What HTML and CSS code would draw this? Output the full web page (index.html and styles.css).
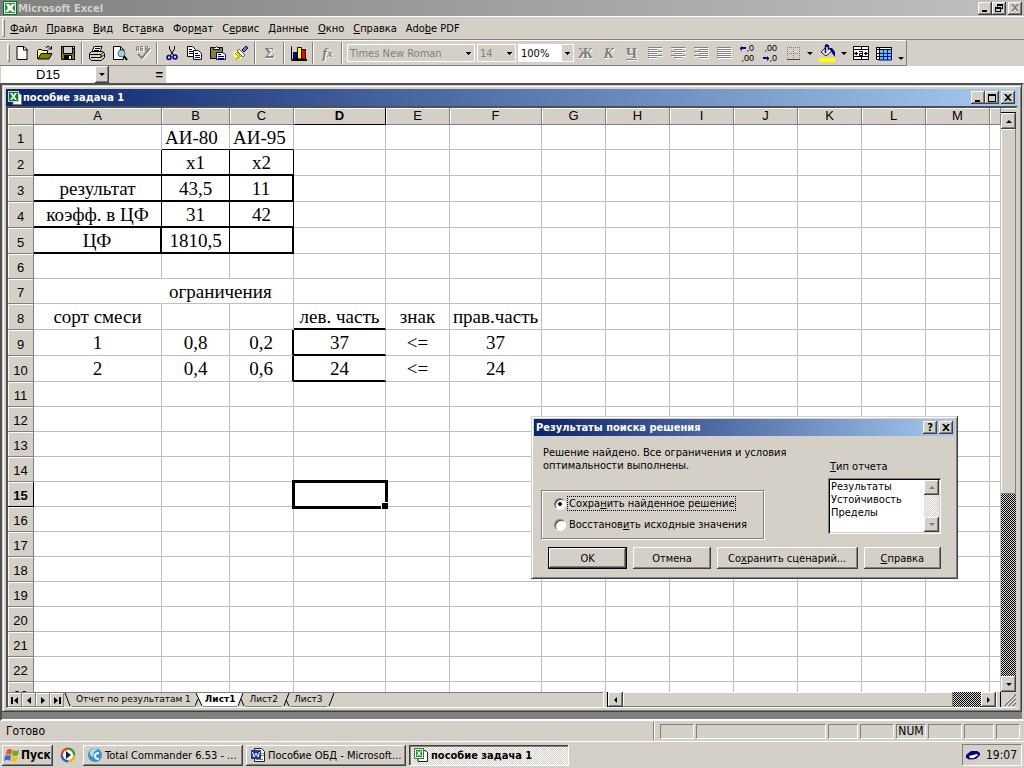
FILE: index.html
```html
<!DOCTYPE html>
<html lang="ru">
<head>
    <meta charset="UTF-8">
    <meta name="viewport" content="width=device-width, initial-scale=1.0">
    <title>Microsoft Excel</title>
    <link rel="stylesheet" href="styles.css">
</head>
<body>
    <header class="titlebar app-title">
        <svg class="icon" viewBox="0 0 16 16"><rect x="1" y="1" width="14" height="14" fill="#0c6b28"/><rect x="2" y="2" width="12" height="12" fill="#d8f0d8"/><rect x="3" y="3" width="10" height="10" fill="#2c9440"/><path d="M4 4h3l1 2 2-2h3l-3 4 3 4h-3l-2-2-2 2H3l3-4z" fill="#fff"/></svg>
        <h1>Microsoft Excel</h1>
        <div class="window-buttons">
            <button class="box-btn" aria-label="Свернуть"><svg viewBox="0 0 10 10"><path d="M2 7h5v2H2z"/></svg></button>
            <button class="box-btn" aria-label="Восстановить"><svg viewBox="0 0 10 10"><path d="M3 1h6v5H7V5h1V3H4v1H3zM1 4h6v5H1zm1 2v2h4V6z" fill-rule="evenodd"/></svg></button>
            <button class="box-btn gap disabled" aria-label="Закрыть" disabled><svg viewBox="0 0 10 10"><path d="M1 1h2l2 2 2-2h2L6 4.500l3 3.500H7L5 6 3 8H1l3-3.500z"/></svg></button>
        </div>
    </header>

    <nav class="menubar">
        <span class="grip"></span>
        <a href="#"><u>Ф</u>айл</a>
        <a href="#"><u>П</u>равка</a>
        <a href="#"><u>В</u>ид</a>
        <a href="#">Вст<u>а</u>вка</a>
        <a href="#">Фор<u>м</u>ат</a>
        <a href="#">С<u>е</u>рвис</a>
        <a href="#"><u>Д</u>анные</a>
        <a href="#"><u>О</u>кно</a>
        <a href="#"><u>С</u>правка</a>
        <a href="#">Ado<u>b</u>e PDF</a>
    </nav>

    <div class="toolbar-row">
        <div class="toolbar">
            <span class="grip"></span>
            <button class="tool" aria-label="Создать"><svg class="icon" viewBox="0 0 16 16"><path d="M3 1.500h7l3 3v10H3z" fill="#fff" stroke="#000"/><path d="M9.500 1v4h4" fill="none" stroke="#000"/></svg></button>
            <button class="tool" aria-label="Открыть"><svg class="icon" viewBox="0 0 16 16"><path d="M.5 14V5.500l1-1h3l1 1h5v3" fill="#ffff80" stroke="#000"/><path d="M1 14l3-5.500h11L12 14z" fill="#808000" stroke="#000"/><path d="M9 3l1-1.500h2l2 2M14.500 1v3h-3" fill="none" stroke="#000"/></svg></button>
            <button class="tool" aria-label="Сохранить"><svg class="icon" viewBox="0 0 16 16"><path d="M1 1h14v14H2l-1-1z" fill="#000"/><path d="M2 2h1v7h10V4h1v10h-2v-4H4v4H3l-1-1z" fill="#808000"/><path d="M4 2h8v6H4z" fill="#d4d0c8"/><path d="M9 11h2v3H9zM13 2h1v1h-1z" fill="#fff"/></svg></button>
            <span class="sep"></span>
            <button class="tool" aria-label="Печать"><svg class="icon" viewBox="0 0 16 16"><path d="M5 1.500h8L11 7H3z" fill="#fff" stroke="#000"/><path d="M6 3.500h5M5 5.500h5" stroke="#000"/><path d="M.5 8.500l2-2h11l2 2v4l-3 3h-10l-2-2z" fill="#d4d0c8" stroke="#000"/><path d="M1 9.500h11l3-3M2 12.500h10v-3M12 12.500l3-3" fill="none" stroke="#000"/><path d="M7 11h3v1H7z" fill="#ff0"/></svg></button>
            <button class="tool" aria-label="Предварительный просмотр"><svg class="icon" viewBox="0 0 16 16"><path d="M1.500 1.500h7l3 3v10h-10z" fill="#fff" stroke="#000"/><path d="M8.500 1v4h4" fill="none" stroke="#000"/><circle cx="9.500" cy="8.500" r="3.500" fill="#80e0e8" stroke="#606060"/><path d="M12 11l3 4" stroke="#000" stroke-width="2"/></svg></button>
            <button class="tool disabled" aria-label="Орфография" disabled><svg class="icon" viewBox="0 0 16 16"><path d="M1.500 6V2l1-1 1 1v4M1 4.500h3M8 1.500H5.500v4h2v-2h-2M10.500 6V1.500h2v4h-2M10.500 3.500h2" fill="none" stroke="#808080"/><path d="M3 9l4 4 8-10" fill="none" stroke="#808080" stroke-width="2"/></svg></button>
            <span class="sep"></span>
            <button class="tool" aria-label="Вырезать"><svg class="icon" viewBox="0 0 16 16"><path d="M5.500 1v3l4 6M10.500 1v3l-4 6" fill="none" stroke="#000"/><circle cx="5" cy="12.500" r="2" fill="none" stroke="#000080" stroke-width="1.500"/><circle cx="11" cy="12" r="2" fill="none" stroke="#000080" stroke-width="1.500"/></svg></button>
            <button class="tool" aria-label="Копировать"><svg class="icon" viewBox="0 0 16 16"><path d="M.5 1.500h5l3 3v7h-8z" fill="#fff" stroke="#000"/><path d="M2 4.500h3M2 6.500h5M2 8.500h5" stroke="#000"/><path d="M6.500 5.500h5l3 3v6h-8z" fill="#fff" stroke="#000080"/><path d="M8 8.500h3M8 10.500h5M8 12.500h5" stroke="#000080"/></svg></button>
            <button class="tool" aria-label="Вставить"><svg class="icon" viewBox="0 0 16 16"><path d="M.5 2.500h12v11H.5z" fill="#808040" stroke="#000"/><path d="M3.500 4.500v-2h2l1-1 1 1h2v2z" fill="#ffff80" stroke="#000"/><path d="M6.500 7.500h6l3 2v5h-9z" fill="#fff" stroke="#000080"/><path d="M8 9.500h3M8 11.500h6M8 13.500h6" stroke="#000080"/></svg></button>
            <button class="tool" aria-label="Формат по образцу"><svg class="icon" viewBox="0 0 16 16"><path d="M0 7l6-2 5 5-4 5-2-2-3 2 1-3-2 0z" fill="#ffff60"/><path d="M2 8l5 5M4 7l4 5M5 12l-2 3" stroke="#808000"/><path d="M6 4l6 6-2 2-6-6z" fill="#fff" stroke="#606060"/><path d="M9 5l4-4 2 2-4 4z" fill="#808080" stroke="#000080"/></svg></button>
            <span class="sep"></span>
            <button class="tool disabled sum" aria-label="Автосумма" disabled>Σ</button>
            <span class="sep"></span>
            <button class="tool" aria-label="Мастер диаграмм"><svg class="icon" viewBox="0 0 16 16"><path d="M0 2l1-1v13h15v2H1l-1-1z" fill="#000"/><path d="M2.500 7.500h4V14h-4z" fill="#0000c0" stroke="#000"/><path d="M6.500 2.500h4V14h-4z" fill="#ff0" stroke="#000"/><path d="M10.500 4.500h4V14h-4z" fill="#f00" stroke="#000"/></svg></button>
            <span class="sep"></span>
            <button class="tool disabled fx" aria-label="Вставка функции" disabled>f<sub>x</sub></button>
            <span class="sep"></span>
            <select class="combo font-name" aria-label="Шрифт" disabled><option>Times New Roman</option></select>
            <select class="combo font-size" aria-label="Размер" disabled><option>14</option></select>
            <select class="combo zoom" aria-label="Масштаб"><option>100%</option></select>
            <button class="tool disabled letter" disabled>Ж</button>
            <button class="tool disabled letter italic" disabled>К</button>
            <button class="tool disabled letter under" disabled>Ч</button>
            <button class="tool disabled" aria-label="По левому краю" disabled><svg class="icon" viewBox="0 0 16 16"><path d="M1 2.500h14M1 4.500h9M1 6.500h14M1 8.500h9M1 10.500h14M1 12.500h9" stroke="#808080"/></svg></button>
            <button class="tool disabled" aria-label="По центру" disabled><svg class="icon" viewBox="0 0 16 16"><path d="M1 2.500h14M4 4.500h8M1 6.500h14M4 8.500h8M1 10.500h14M4 12.500h8" stroke="#808080"/></svg></button>
            <button class="tool disabled" aria-label="По правому краю" disabled><svg class="icon" viewBox="0 0 16 16"><path d="M1 2.500h14M6 4.500h9M1 6.500h14M6 8.500h9M1 10.500h14M6 12.500h9" stroke="#808080"/></svg></button>
            <button class="tool disabled" aria-label="По ширине" disabled><svg class="icon" viewBox="0 0 16 16"><path d="M1 2.500h14M1 4.500h14M1 6.500h14M1 8.500h14M1 10.500h14M1 12.500h14" stroke="#808080"/></svg></button>
            <button class="tool digits" aria-label="Увеличить разрядность"><span><svg class="arrow" viewBox="0 0 6 5"><path d="M0 2l2-2v1h4v2H2v2L0 3z" fill="#000080"/></svg>,0</span><span>,00</span></button>
            <button class="tool digits" aria-label="Уменьшить разрядность"><span>,00</span><span><svg class="arrow" viewBox="0 0 6 5"><path d="M6 2L4 0v1H0v2h4v2l2-2z" fill="#000080"/></svg>,0</span></button>
            <button class="tool" aria-label="Границы"><svg class="icon" viewBox="0 0 16 16"><path d="M2.500 2v12M8.500 2v12M14.500 2v12M2 2.500h13M2 8.500h13" stroke="#808080" stroke-dasharray="1 1"/><path d="M2 14.500h13" stroke="#404040"/></svg></button>
            <button class="drop" aria-label="Виды границ"></button>
            <button class="tool" aria-label="Цвет заливки"><svg class="icon tall" viewBox="0 0 16 18"><path d="M2 8l6-6 5 5-6 5z" fill="#e8e8e8" stroke="#202020"/><path d="M6.500 9V2l1-1.500 2 1.500v4" fill="none" stroke="#000080" stroke-width="1.500"/><path d="M10 4h3l3 4v5l-3-4z" fill="#000080"/><path d="M0 14h16v4H0z" fill="#ff0"/></svg></button>
            <button class="drop" aria-label="Выбор цвета"></button>
            <button class="tool" aria-label="Объединить ячейки"><svg class="icon" viewBox="0 0 16 16"><path d="M.5 1.500h15v13H.5zM.5 4.500h15M.5 11.500h15M8.500 1v3M8.500 12v3" fill="#fff" stroke="#000"/><path d="M1 8.500h4M11 8.500h4M6 6.500h3.500v4h-3v-2h3" fill="none" stroke="#000"/><path d="M1 8.500l3-2v4zM15 8.500l-3-2v4z"/></svg></button>
            <button class="tool" aria-label="Таблица"><svg class="icon" viewBox="0 0 16 16"><path d="M.5 2.500h15v12H.5z" fill="#fff" stroke="#000"/><path d="M4 5h12v10H4z" fill="#40d0f0"/><path d="M.5 2.500h15v2H.5zM3.500 2v12M0 8.500h4M0 11.500h4" fill="none" stroke="#000"/><path d="M7.500 5v10M11.500 5v10M4 8.500h12M4 11.500h12" stroke="#000080"/><path d="M15.500 3v12H3" fill="none" stroke="#000080"/></svg></button>
            <button class="drop low" aria-label="Другие кнопки"></button>
        </div>
    </div>

    <div class="formula-bar">
        <input class="name-box" type="text" value="D15" aria-label="Имя ячейки">
        <button class="box-btn name-drop" aria-label="Список имён"><span class="tri down"></span></button>
        <button class="equals">=</button>
        <input class="formula" type="text" aria-label="Строка формул">
    </div>

    <main class="workspace">
        <section class="book">
            <div class="titlebar book-title">
                <svg class="icon" viewBox="0 0 16 16"><path d="M6 3.500h7l1.500 2v9H6z" fill="#fff" stroke="#808080"/><rect x="1" y="1" width="11" height="11" fill="#b8e0b8"/><rect x="2" y="2" width="9" height="9" fill="#107830"/><path d="M3 3h2l1.500 2L8 3h2L7.500 6.500 10 10H8L6.500 8 5 10H3l2.500-3.500z" fill="#fff"/></svg>
                <h2>пособие задача 1</h2>
                <div class="window-buttons">
                    <button class="box-btn" aria-label="Свернуть"><svg viewBox="0 0 10 10"><path d="M2 7h5v2H2z"/></svg></button>
                    <button class="box-btn" aria-label="Развернуть"><svg viewBox="0 0 10 10"><path d="M1 1h8v8H1zm1 2v5h6V3z" fill-rule="evenodd"/></svg></button>
                    <button class="box-btn gap" aria-label="Закрыть"><svg viewBox="0 0 10 10"><path d="M1 1h2l2 2 2-2h2L6 4.500l3 3.500H7L5 6 3 8H1l3-3.500z"/></svg></button>
                </div>
            </div>
            <div class="book-body">
                <div class="grid-row">
                    <div class="grid-view">
                        <table class="grid">
                            <colgroup>
                                <col class="c-head"><col class="c-a"><col class="c-b"><col class="c-std"><col class="c-wide"><col class="c-std"><col class="c-wide">
                                <col class="c-std"><col class="c-std"><col class="c-std"><col class="c-std"><col class="c-std"><col class="c-std"><col class="c-std"><col>
                            </colgroup>
                            <thead>
                                <tr>
                                    <th></th><th>A</th><th>B</th><th>C</th><th class="current">D</th><th>E</th><th>F</th><th>G</th>
                                    <th>H</th><th>I</th><th>J</th><th>K</th><th>L</th><th>M</th><th></th>
                                </tr>
                            </thead>
                            <tbody id="gridBody"></tbody>
                        </table>
                    </div>
                    <div class="vscroll">
                        <span class="split"></span>
                        <button class="box-btn" aria-label="Вверх"><span class="tri up"></span></button>
                        <span class="thumb"></span>
                        <span class="track dither"></span>
                        <button class="box-btn" aria-label="Вниз"><span class="tri down"></span></button>
                    </div>
                </div>
                <div class="tab-row">
                    <div class="sheet-tabs">
                        <button class="nav-btn" aria-label="Первый лист"><svg viewBox="0 0 10 9"><path d="M1 1h2v7H1zM8 1v7L4 4.500z"/></svg></button>
                        <button class="nav-btn" aria-label="Предыдущий лист"><svg viewBox="0 0 10 9"><path d="M7 1v7L3 4.500z"/></svg></button>
                        <button class="nav-btn" aria-label="Следующий лист"><svg viewBox="0 0 10 9"><path d="M3 1v7l4-3.500z"/></svg></button>
                        <button class="nav-btn" aria-label="Последний лист"><svg viewBox="0 0 10 9"><path d="M7 1h2v7H7zM2 1v7l4-3.500z"/></svg></button>
                        <svg class="edge" viewBox="0 0 8 14"><path d="M1 0l5 13" stroke="#000"/></svg>
                        <button class="tab">Отчет по результатам 1</button>
                        <svg class="edge" viewBox="0 0 8 14"><path d="M1 0h7v14H7z" fill="#fff"/><path d="M1 0l6 13M3 6L0 13" stroke="#000" fill="none"/></svg>
                        <button class="tab active">Лист1</button>
                        <svg class="edge" viewBox="0 0 8 14"><path d="M0 0h6L1 14H0z" fill="#fff"/><path d="M6 0L1 13M4 6l3 7" stroke="#000" fill="none"/></svg>
                        <button class="tab">Лист2</button>
                        <svg class="edge" viewBox="0 0 8 14"><path d="M7 0L2 13M4 7l3 6" stroke="#000" fill="none"/></svg>
                        <button class="tab">Лист3</button>
                        <svg class="edge" viewBox="0 0 8 14"><path d="M7 0L2 13" stroke="#000"/></svg>
                    </div>
                    <div class="hscroll">
                        <span class="vsplit"></span>
                        <button class="box-btn" aria-label="Влево"><span class="tri left"></span></button>
                        <span class="thumb"></span>
                        <span class="track dither"></span>
                        <button class="box-btn" aria-label="Вправо"><span class="tri right"></span></button>
                        <span class="vsplit"></span>
                        <svg class="resize" viewBox="0 0 15 14"><path d="M3 14L15 2M7 14l8-8M11 14l4-4" stroke="#808080" stroke-width="2"/><path d="M2 14L15 1M6 14l9-9M10 14l5-5" stroke="#fff"/></svg>
                    </div>
                </div>
            </div>
        </section>
    </main>

    <footer class="statusbar">
        <span class="status-text">Готово</span>
        <span class="status-sep"></span>
        <span class="pane mid"></span>
        <span class="pane wide"></span>
        <span class="pane"></span>
        <span class="pane mid"></span>
        <span class="pane">NUM</span>
        <span class="pane mid"></span>
        <span class="pane"></span>
        <span class="pane small"></span>
    </footer>

    <div class="taskbar">
        <button class="start"><svg class="icon" viewBox="0 0 16 16"><path d="M3 3q3-2 5 0L7 8Q4 6 1.500 8z" fill="#f05020"/><path d="M9 3q3 2 6 0l-1 5q-3 2-6 0z" fill="#60b020"/><path d="M1 9q3-2 6 0l-1 5q-3-2-6 0z" fill="#3070e0"/><path d="M8 9q3 2 6 0l-1 5q-3 2-6 0z" fill="#f8c010"/></svg>Пуск</button>
        <button class="quick" aria-label="Проигрыватель"><svg class="icon" viewBox="0 0 16 16"><path d="M8 2a6 6 0 0 1 6 6" fill="none" stroke="#30a030" stroke-width="3"/><path d="M14 8a6 6 0 0 1-6 6" fill="none" stroke="#f0b010" stroke-width="3"/><path d="M8 14a6 6 0 0 1-6-6" fill="none" stroke="#3060d0" stroke-width="3"/><path d="M2 8a6 6 0 0 1 6-6" fill="none" stroke="#e84820" stroke-width="3"/><circle cx="8" cy="8" r="5" fill="#fff"/><path d="M6 4l5 4-5 4z" fill="#102040"/></svg></button>
        <button class="task"><svg class="icon" viewBox="0 0 16 16"><circle cx="8" cy="8" r="7" fill="#3c90d0"/><path d="M3 4q3-4 8-2l-4 3-1 5q-4-1-3-6z" fill="#a8e0f0"/><path d="M12 6q-4 0-4 3t4 3" fill="none" stroke="#e8ffff" stroke-width="2"/><path d="M3 11l4 3-3-1z" fill="#40b040"/></svg><span>Total Commander 6.53 - ...</span></button>
        <button class="task"><svg class="icon" viewBox="0 0 16 16"><path d="M4.500 1.500h7l3 3v10h-10z" fill="#fff" stroke="#202020"/><path d="M11 6.500h3M11 8.500h3M6 12.500h7" stroke="#808080"/><rect x="1" y="3" width="10" height="9" fill="#203c98"/><path d="M2.500 5l1.500 5 2-4 2 4 1.500-5" fill="none" stroke="#fff"/></svg><span>Пособие ОБД - Microsoft...</span></button>
        <button class="task pressed"><svg class="icon" viewBox="0 0 16 16"><path d="M5 3.500h7l2.500 2v9H5z" fill="#fff" stroke="#202020"/><rect x="1" y="1" width="10" height="11" fill="#189030"/><rect x="2.500" y="2.500" width="7" height="8" fill="none" stroke="#fff"/><path d="M4 4h1l1 1.500L7 4h1.500L7 6.500 8.500 9H7L6 7.500 5 9H3.500L5 6.500z" fill="#fff"/></svg><span>пособие задача 1</span></button>
        <div class="tray">
            <svg class="icon" viewBox="0 0 16 16"><path d="M1 8l5-4h6l3 2v2l-4 4H4l-3-1z" fill="#000080"/><path d="M4 9l8-2 1 1-4 3H5z" fill="#fff"/><path d="M3 12h6" stroke="#801060"/></svg>
            <span>19:07</span>
        </div>
    </div>

    <form class="dialog">
        <div class="titlebar dialog-title">
            <h2>Результаты поиска решения</h2>
            <div class="window-buttons">
                <button type="button" class="box-btn" aria-label="Помощь">?</button>
                <button type="button" class="box-btn gap" aria-label="Закрыть"><svg viewBox="0 0 10 10"><path d="M1 1h2l2 2 2-2h2L6 4.500l3 3.500H7L5 6 3 8H1l3-3.500z"/></svg></button>
            </div>
        </div>
        <div class="dialog-main">
            <div class="dialog-left">
                <p>Решение найдено. Все ограничения и условия оптимальности выполнены.</p>
                <fieldset>
                    <label><input type="radio" name="keep" checked><span class="focus">Сохра<u>н</u>ить найденное решение</span></label>
                    <label><input type="radio" name="keep"><span>Восстанов<u>и</u>ть исходные значения</span></label>
                </fieldset>
            </div>
            <div class="dialog-right">
                <label for="reportType"><u>Т</u>ип отчета</label>
                <div class="listbox">
                    <select id="reportType" size="4">
                        <option>Результаты</option>
                        <option>Устойчивость</option>
                        <option>Пределы</option>
                    </select>
                    <div class="list-scroll">
                        <button type="button" class="box-btn disabled" aria-label="Вверх" disabled><span class="tri up"></span></button>
                        <span class="list-track"></span>
                        <button type="button" class="box-btn disabled" aria-label="Вниз" disabled><span class="tri down"></span></button>
                    </div>
                </div>
            </div>
        </div>
        <div class="dialog-buttons">
            <button type="button" class="push default">OK</button>
            <button type="button" class="push">Отмена</button>
            <button type="button" class="push long">Со<u>х</u>ранить сценарий...</button>
            <button type="button" class="push"><u>С</u>правка</button>
        </div>
    </form>

    <script>
        const columns = 'ABCDEFGHIJKLMN'.split('');
        const rowCount = 23;
        const tallRows = [2, 3, 4, 5, 8, 9, 10];

        const values = {
            B1: 'АИ-80', C1: 'АИ-95',
            B2: 'x1', C2: 'x2',
            A3: 'результат', B3: '43,5', C3: '11',
            A4: 'коэфф. в ЦФ', B4: '31', C4: '42',
            A5: 'ЦФ', B5: '1810,5',
            B7: 'ограничения',
            A8: 'сорт смеси', D8: 'лев. часть', E8: 'знак', F8: 'прав.часть',
            A9: '1', B9: '0,8', C9: '0,2', D9: '37', E9: '<=', F9: '37',
            A10: '2', B10: '0,4', C10: '0,6', D10: '24', E10: '<=', F10: '24'
        };

        // r/b = thin right/bottom line, R/B = thick one, n = no right line
        const borders = {
            B1: 'b', C1: 'b',
            A2: 'r B', B2: 'r B', C2: 'r B',
            A3: 'r B', B3: 'r B', C3: 'R B',
            A4: 'r B', B4: 'r B', C4: 'r B',
            A5: 'R B', B5: 'r B', C5: 'R B',
            A7: 'n', D8: 'B', C9: 'R', D9: 'B', C10: 'R', D10: 'B'
        };

        const names = { r: 'line-right', b: 'line-bottom', R: 'thick-right', B: 'thick-bottom', n: 'no-right' };
        const body = document.getElementById('gridBody');

        for (let r = 1; r <= rowCount; r++) {
            const row = document.createElement('tr');
            if (tallRows.includes(r)) row.className = 'tall';

            const head = document.createElement('th');
            head.textContent = r;
            if (r === 15) head.className = 'current';
            row.appendChild(head);

            columns.forEach((column) => {
                const id = column + r;
                if (id === 'C7') return;
                const cell = document.createElement('td');
                cell.textContent = values[id] || '';
                (borders[id] || '').split(' ').filter(Boolean).forEach((key) => cell.classList.add(names[key]));
                if (r === 1) cell.classList.add('left');
                if (id === 'B7') {
                    cell.colSpan = 2;
                    cell.classList.add('left', 'indent');
                }
                if (id === 'D15') cell.classList.add('selected');
                row.appendChild(cell);
            });
            body.appendChild(row);
        }
    </script>
</body>
</html>
```
FILE: styles.css
```css
* {
    box-sizing: border-box;
}
body {
    margin: 0;
    height: 100vh;
    display: flex;
    flex-direction: column;
    overflow: hidden;
    background-color: #d4d0c8;
    color: #000;
    font-family: "DejaVu Sans Condensed", "DejaVu Sans", sans-serif;
    font-size: 11px;
    line-height: 13px;
}
button, input, select {
    font: inherit;
    color: inherit;
    margin: 0;
    padding: 0;
    border: 0;
    border-radius: 0;
    background: none;
    outline: none;
}
h1, h2, p {
    margin: 0;
    font-size: 11px;
}
svg {
    display: block;
    flex: none;
}
.icon {
    width: 16px;
    height: 16px;
}
.icon.tall {
    height: 18px;
}

/* title bars */
.titlebar {
    display: flex;
    align-items: center;
    flex: none;
    padding: 0 2px;
    color: #fff;
}
.titlebar h1, .titlebar h2 {
    flex: 1;
    white-space: nowrap;
}
.app-title {
    height: 16px;
    color: #d4d0c8;
    background: linear-gradient(to right, #808080, #c0c0c0);
}
.book-title {
    height: 17px;
    padding: 0 3px 0 1px;
    background: linear-gradient(to right, #0a246a, #a6caf0);
}
.dialog-title {
    height: 17px;
    background: linear-gradient(to right, #0a246a, #a6caf0);
}
.window-buttons {
    display: flex;
}
.box-btn {
    display: flex;
    align-items: center;
    justify-content: center;
    flex: none;
    width: 14px;
    height: 13px;
    color: #000;
    font-weight: bold;
    background-color: #d4d0c8;
    box-shadow: inset -1px -1px #404040, inset 1px 1px #fff, inset -2px -2px #808080;
}
.box-btn svg {
    width: 10px;
    height: 10px;
}
.box-btn.gap {
    margin-left: 2px;
}
.box-btn.disabled svg {
    fill: #808080;
}

/* menu and toolbar */
.menubar {
    display: flex;
    align-items: center;
    flex: none;
    height: 24px;
    padding-left: 2px;
    border-top: 1px solid #fff;
    border-bottom: 1px solid #808080;
}
.menubar a {
    padding: 0 4px 0 5px;
    color: #000;
    text-decoration: none;
}
.grip {
    flex: none;
    width: 3px;
    height: 18px;
    border: 1px solid #fff;
    border-right-color: #808080;
    border-bottom-color: #808080;
}
.toolbar-row {
    display: flex;
    flex: none;
    height: 26px;
}
.toolbar {
    display: flex;
    align-items: center;
    padding: 0 0 0 7px;
    border: 1px solid #fff;
    border-left: 0;
    border-right-color: #808080;
    border-bottom-color: #808080;
}
.tool {
    display: flex;
    align-items: center;
    justify-content: center;
    width: 23px;
    height: 22px;
    flex: none;
}
.tool.disabled {
    color: #808080;
    text-shadow: 1px 1px #fff;
}
.tool.disabled svg {
    filter: drop-shadow(1px 1px 0 #fff);
}
.sep {
    width: 2px;
    height: 22px;
    margin: 0 2px;
    border-left: 1px solid #808080;
    border-right: 1px solid #fff;
}
.sum, .fx, .letter {
    font-family: "Liberation Serif", serif;
    font-size: 15px;
    font-weight: bold;
}
.fx {
    font-style: italic;
}
.fx sub {
    font-size: 11px;
}
.letter.italic {
    font-style: italic;
}
.letter.under {
    text-decoration: underline;
}
.digits {
    flex-direction: column;
    align-items: flex-end;
    padding-right: 4px;
    font-family: "Liberation Sans", sans-serif;
    font-size: 9px;
    line-height: 10px;
}
.digits span {
    display: flex;
    align-items: center;
}
.arrow {
    width: 6px;
    height: 5px;
}
.drop {
    display: flex;
    align-items: center;
    justify-content: center;
    width: 11px;
    height: 22px;
}
.drop::after {
    content: "";
    border: 3px solid transparent;
    border-top-color: #000;
    border-bottom: 0;
}
.drop.low {
    align-items: flex-end;
    padding-bottom: 4px;
}
.combo {
    appearance: none;
    flex: none;
    height: 18px;
    margin-right: 2px;
    padding: 0 2px;
    border: 1px solid #fff;
    opacity: 1;
    background: url("data:image/svg+xml,%3Csvg xmlns='http://www.w3.org/2000/svg' width='11' height='16'%3E%3Crect width='11' height='16' fill='%23d4d0c8'/%3E%3Cpath d='M3 7h5v1H7v1H6v1H5V9H4V8H3z'/%3E%3C/svg%3E") right center no-repeat;
}
.combo:disabled {
    color: #808080;
}
.font-name {
    width: 128px;
    margin-left: 2px;
}
.font-size {
    width: 39px;
}
.zoom {
    width: 56px;
    margin-right: 0;
    background-color: #fff;
}

/* formula bar */
.formula-bar {
    display: flex;
    flex: none;
    height: 17px;
    padding-left: 1px;
    font-family: "Liberation Sans", sans-serif;
    font-size: 13px;
}
.name-box {
    width: 94px;
    text-align: center;
    background-color: #fff;
}
.name-drop {
    height: 17px;
}
.equals {
    width: 57px;
    padding-right: 3px;
    text-align: right;
    font-weight: bold;
}
.formula {
    flex: 1;
    background-color: #fff;
}
.tri {
    border: 3px solid transparent;
}
.tri.down {
    border-top-color: #000;
    border-bottom: 0;
}
.tri.up {
    border-bottom-color: #000;
    border-top: 0;
}
.tri.left {
    border-right-color: #000;
    border-left: 0;
}
.tri.right {
    border-left-color: #000;
    border-right: 0;
}
.disabled .tri.down {
    border-top-color: #808080;
}
.disabled .tri.up {
    border-bottom-color: #808080;
}

/* workbook window */
.workspace {
    display: flex;
    flex: 1;
    min-height: 0;
    padding-bottom: 7px;
    border: 2px solid #505050;
    border-right-color: #d4d0c8;
    border-bottom-color: #fff;
    background-color: #808080;
}
.book {
    display: flex;
    flex-direction: column;
    flex: 1;
    min-width: 0;
    padding: 4px;
    background-color: #d4d0c8;
    box-shadow: inset -1px -1px #404040, inset 1px 1px #d4d0c8, inset 2px 2px #fff, inset -2px -2px #808080;
}
.book-body {
    display: flex;
    flex-direction: column;
    flex: 1;
    min-height: 0;
    border: 2px solid #505050;
    border-right-color: #d4d0c8;
    border-bottom: 1px solid #fff;
}
.grid-row {
    display: flex;
    flex: 1;
    min-height: 0;
}
.grid-view {
    flex: 1;
    min-width: 0;
    overflow: hidden;
    background-color: #fff;
}
.grid {
    width: 100%;
    table-layout: fixed;
    border-spacing: 0;
}
.c-head {
    width: 26px;
}
.c-a {
    width: 128px;
}
.c-b {
    width: 68px;
}
.c-std {
    width: 64px;
}
.c-wide {
    width: 92px;
}
.grid th {
    padding: 0;
    font-family: "Liberation Sans", sans-serif;
    font-size: 13px;
    font-weight: normal;
    line-height: 14px;
    background-color: #d4d0c8;
    border-right: 1px solid #808080;
    border-bottom: 1px solid #808080;
    box-shadow: inset 1px 1px #fff;
}
.grid thead th {
    height: 17px;
}
.grid tbody th {
    padding-top: 4px;
}
.grid th.current {
    font-weight: bold;
    border-right-color: #000;
    border-bottom-color: #000;
}
.grid td {
    height: 25px;
    padding: 3px 0 0;
    font-family: "Liberation Serif", serif;
    font-size: 19px;
    line-height: 20px;
    text-align: center;
    vertical-align: top;
    white-space: nowrap;
    border-right: 1px solid #c0c0c0;
    border-bottom: 1px solid #c0c0c0;
}
.grid .tall td {
    height: 26px;
}
.grid td.left {
    padding-left: 3px;
    text-align: left;
}
.grid td.indent {
    padding-left: 7px;
}
.grid td.no-right {
    border-right-color: #fff;
}
.grid td.line-right {
    border-right-color: #000;
}
.grid td.line-bottom {
    border-bottom-color: #000;
}
.grid td.thick-right {
    border-right: 2px solid #000;
}
.grid td.thick-bottom {
    border-bottom: 2px solid #000;
}
.grid td.selected {
    position: relative;
    outline: 3px solid #000;
    outline-offset: -1px;
}
.selected::after {
    content: "";
    position: absolute;
    right: -3px;
    bottom: -3px;
    width: 6px;
    height: 6px;
    background-color: #000;
    border: 1px solid #fff;
    border-right: 0;
    border-bottom: 0;
    z-index: 1;
}

/* scroll bars */
.dither {
    background: repeating-conic-gradient(#000 0 25%, #d4d0c8 0 50%) 0 0 / 2px 2px;
}
.thumb {
    background-color: #d4d0c8;
    box-shadow: inset -1px -1px #808080, inset 1px 1px #fff;
}
.vscroll {
    display: flex;
    flex-direction: column;
    flex: none;
    width: 15px;
}
.vscroll .box-btn {
    width: 15px;
    height: 16px;
}
.vscroll .thumb {
    flex: 2;
}
.vscroll .track {
    flex: 1;
}
.split {
    height: 5px;
    border-top: 1px solid #fff;
    border-bottom: 1px solid #000;
}
.tab-row {
    display: flex;
    flex: none;
    height: 15px;
}
.sheet-tabs {
    display: flex;
    flex: 1;
    min-width: 0;
    border-top: 1px solid #808080;
}
.nav-btn {
    display: flex;
    align-items: center;
    justify-content: center;
    width: 14px;
    box-shadow: inset -1px -1px #808080, inset 1px 1px #fff;
}
.nav-btn svg {
    width: 10px;
    height: 9px;
}
.edge {
    width: 8px;
    height: 14px;
}
.tab {
    padding: 0 4px;
    font-family: "DejaVu Sans", sans-serif;
    font-size: 9px;
    white-space: nowrap;
    border-bottom: 1px solid #808080;
}
.tab.active {
    padding: 0 2px;
    font-weight: bold;
    background-color: #fff;
}
.hscroll {
    display: flex;
    flex: 0 0 41%;
}
.hscroll .box-btn {
    width: 15px;
    height: 15px;
}
.hscroll .thumb {
    flex: 12;
}
.hscroll .track {
    flex: 1;
}
.vsplit {
    width: 5px;
    border-left: 1px solid #fff;
    border-right: 1px solid #000;
}
.resize {
    width: 15px;
    height: 14px;
}

/* status bar */
.statusbar {
    display: flex;
    align-items: center;
    flex: none;
    gap: 2px;
    height: 20px;
    padding: 0 4px 0 6px;
    font-size: 12px;
}
.status-text {
    flex: 1;
}
.status-sep {
    width: 2px;
    height: 18px;
    margin-right: 3px;
    border-left: 1px solid #808080;
    border-right: 1px solid #fff;
}
.pane {
    width: 30px;
    height: 15px;
    text-align: center;
    border: 1px solid #808080;
    border-right-color: #fff;
    border-bottom-color: #fff;
}
.pane.mid {
    width: 34px;
}
.pane.wide {
    width: 130px;
}
.pane.small {
    width: 24px;
}

/* taskbar */
.taskbar {
    display: flex;
    align-items: center;
    flex: none;
    gap: 3px;
    height: 27px;
    padding: 0 2px;
    border-top: 1px solid #fff;
}
.start, .task {
    display: flex;
    align-items: center;
    height: 21px;
    gap: 2px;
    box-shadow: inset -1px -1px #404040, inset 1px 1px #fff, inset -2px -2px #808080;
}
.start {
    width: 51px;
    padding-left: 2px;
    gap: 1px;
    font-size: 12px;
    font-weight: bold;
}
.quick {
    width: 24px;
    padding-left: 4px;
}
.task {
    width: 160px;
    padding: 0 4px;
    white-space: nowrap;
}
.task.pressed {
    font-weight: bold;
    background: repeating-conic-gradient(#fff 0 25%, #d4d0c8 0 50%) 0 0 / 2px 2px;
    box-shadow: inset -1px -1px #fff, inset 1px 1px #404040, inset 2px 2px #808080;
}
.tray {
    display: flex;
    align-items: center;
    gap: 5px;
    width: 60px;
    height: 22px;
    margin-left: auto;
    padding: 0 2px;
    font-size: 12px;
    border: 1px solid #808080;
    border-right-color: #fff;
    border-bottom-color: #fff;
}

/* solver dialog, floats over the workbook */
.dialog {
    position: absolute;
    left: 531px;
    top: 416px;
    width: 427px;
    padding: 3px;
    background-color: #d4d0c8;
    box-shadow: inset -1px -1px #404040, inset 1px 1px #d4d0c8, inset 2px 2px #fff, inset -2px -2px #808080;
}
.dialog-main {
    display: flex;
    justify-content: space-between;
    padding: 10px 14px 0 7px;
}
.dialog-left {
    width: 260px;
}
.dialog-left p {
    padding-left: 2px;
}
fieldset {
    display: flex;
    flex-direction: column;
    gap: 6px;
    width: 223px;
    margin: 18px 0 0;
    padding: 5px 0 6px 12px;
    border: 1px solid #808080;
    box-shadow: 1px 1px #fff, inset 1px 1px #fff;
}
fieldset label {
    display: flex;
    align-items: center;
    gap: 1px;
    white-space: nowrap;
}
fieldset span {
    padding: 0 1px;
    border: 1px dotted transparent;
}
fieldset .focus {
    border-color: #000;
}
input[type="radio"] {
    appearance: none;
    flex: none;
    width: 12px;
    height: 12px;
    border-radius: 50%;
    border: 1px solid #808080;
    border-right-color: #fff;
    border-bottom-color: #fff;
    background-color: #fff;
    box-shadow: inset 1px 1px #404040;
}
input[type="radio"]:checked {
    background-image: radial-gradient(circle, #000 2px, transparent 2px);
}
.dialog-right {
    width: 113px;
    padding-top: 14px;
}
.dialog-right label {
    display: block;
    padding-left: 2px;
}
.listbox {
    display: flex;
    height: 56px;
    margin-top: 5px;
    padding: 2px;
    background-color: #fff;
    box-shadow: inset 1px 1px #808080, inset -1px -1px #fff, inset 2px 2px #000, inset -2px -2px #d4d0c8;
}
.listbox select {
    flex: 1;
    height: 52px;
    appearance: none;
    overflow: hidden;
}
.listbox option {
    min-height: 13px;
    padding: 0 1px;
}
.list-scroll {
    display: flex;
    flex-direction: column;
    width: 15px;
}
.list-scroll .box-btn {
    width: 15px;
    height: 15px;
}
.list-track {
    flex: 1;
    background: repeating-conic-gradient(#fff 0 25%, #d4d0c8 0 50%) 0 0 / 2px 2px;
}
.dialog-buttons {
    display: flex;
    gap: 6px;
    padding: 8px 14px 7px 14px;
}
.push {
    flex: 1;
    height: 22px;
    white-space: nowrap;
    box-shadow: inset -1px -1px #404040, inset 1px 1px #fff, inset -2px -2px #808080;
}
.push.long {
    flex: none;
    width: 141px;
}
.push.default {
    border: 1px solid #000;
}
```
